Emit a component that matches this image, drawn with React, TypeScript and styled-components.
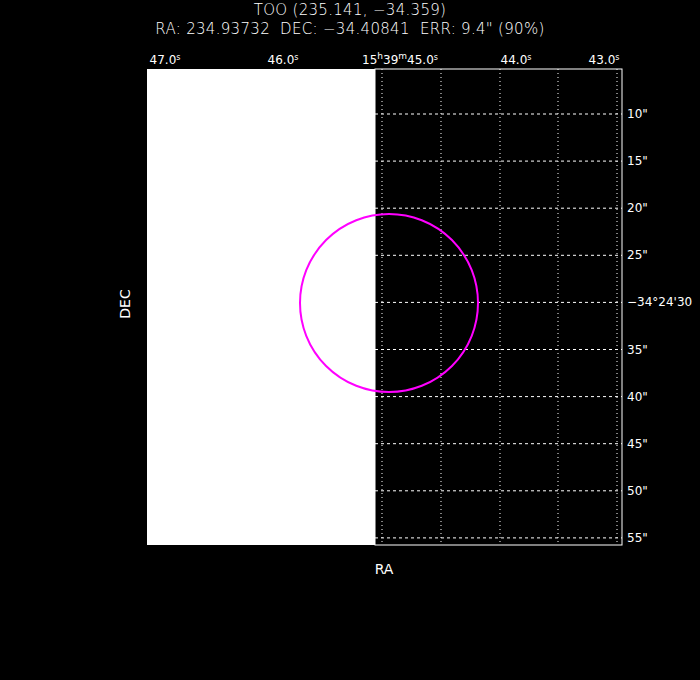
import React from 'react';
import styled, { createGlobalStyle } from 'styled-components';

const Global = createGlobalStyle`
  body { margin: 0; background: #000; }
`;

const Page = styled.div`
  width: 700px;
  height: 680px;
  background: #000;
  color: #fff;
  font-family: "DejaVu Sans", sans-serif;
  display: flex;
  flex-direction: column;
  overflow: hidden;
`;

const Header = styled.div`
  height: 44px;
  display: flex;
  flex-direction: column;
  align-items: center;
  padding-top: 1px;
  font-size: 15px;
  line-height: 19px;
  font-weight: 300;
  letter-spacing: 0.3px;
`;

const Chart = styled.svg`
  display: block;
`;

const OY = 44; // svg top offset in page
const left = 147, right = 622, top = 68 - OY, bottom = 544 - OY;
const split = 375;
const vLines = [382, 441, 500, 558, 617];
const hLabels = ['10"', '15"', '20"', '25"', '', '35"', '40"', '45"', '50"', '55"'];
const hYs = hLabels.map((_, i) => 113 + i * 47.1 - OY);
const topLabels: [number, string, string][] = [
  [165, '47.0', 's'],
  [283, '46.0', 's'],
  [400, '15h39m45.0', 's'],
  [516, '44.0', 's'],
  [604, '43.0', 's'],
];

export default function App() {
  return (
    <Page>
      <Global />
      <Header>
        <span>TOO (235.141, −34.359)</span>
        <span>RA: 234.93732&nbsp;&nbsp;DEC: −34.40841&nbsp;&nbsp;ERR: 9.4" (90%)</span>
      </Header>
      <Chart width={700} height={636} fontFamily="DejaVu Sans, sans-serif" fill="#fff">
        <rect x={left} y={top} width={split - left} height={bottom - top} fill="#fff" />
        <rect x={split} y={top} width={right - split} height={bottom - top} fill="none" stroke="#fff" strokeWidth={1} />
        {vLines.map((x) => (
          <line key={x} x1={x} x2={x} y1={top} y2={bottom} stroke="#fff" strokeDasharray="1 3" />
        ))}
        {hYs.map((y) => (
          <line key={y} x1={split} x2={right} y1={y} y2={y} stroke="#fff" strokeDasharray="3 3" />
        ))}
        {topLabels.map(([x, t, s]) => {
          const m = t.match(/^15h39m(.*)$/);
          return (
            <text key={x} x={x} y={top - 5} fontSize={12} textAnchor="middle">
              {m ? (
                <>
                  15<tspan fontSize={9} dy={-5}>h</tspan>
                  <tspan dy={5}>39</tspan>
                  <tspan fontSize={9} dy={-5}>m</tspan>
                  <tspan dy={5}>{m[1]}</tspan>
                </>
              ) : (
                t
              )}
              <tspan fontSize={8} dy={-4}>{s}</tspan>
            </text>
          );
        })}
        {hYs.map((y, i) => (
          <text key={i} x={627} y={y + 4} fontSize={12}>
            {hLabels[i] || '−34°24\'30'}
          </text>
        ))}
        <circle cx={389} cy={302 - OY} r={89} fill="none" stroke="#ff00ff" strokeWidth={2} />
        <text x={130} y={303 - OY} fontSize={14} textAnchor="middle" transform={`rotate(-90 130 ${303 - OY})`}>
          DEC
        </text>
        <text x={384} y={573 - OY} fontSize={14} textAnchor="middle">RA</text>
      </Chart>
    </Page>
  );
}
